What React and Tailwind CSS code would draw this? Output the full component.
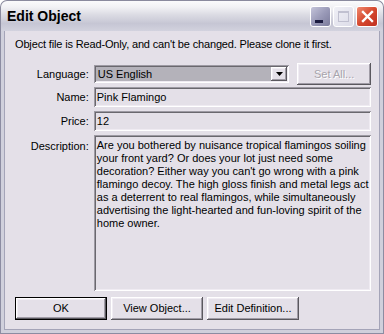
import React from "react";

const FONT = { fontFamily: '"Liberation Sans", Arial, sans-serif' };

const sunken =
  "shadow-[inset_1px_1px_0_#9d9aa3,inset_-1px_-1px_0_#ffffff,inset_2px_2px_0_#6a686e,inset_-2px_-2px_0_#efebf2]";
const raised =
  "shadow-[inset_-1px_-1px_0_#5a585e,inset_1px_1px_0_#ffffff,inset_-2px_-2px_0_#a09ca6,inset_2px_2px_0_#f1edf4]";

function Btn({ children, className = "", def = false }) {
  if (def) {
    return (
      <div className={"border border-black " + className}>
        <div className={"h-full flex items-center justify-center text-[11px] text-black bg-[#e4e0e8] " + raised}>
          {children}
        </div>
      </div>
    );
  }
  return (
    <div className={"flex items-center justify-center text-[11px] text-black bg-[#e4e0e8] " + raised + " " + className}>
      {children}
    </div>
  );
}

export default function App() {
  const lines = [
    "Are you bothered by nuisance tropical flamingos soiling",
    "your front yard? Or does your lot just need some",
    "decoration? Either way you can't go wrong with a pink",
    "flamingo decoy. The high gloss finish and metal legs act",
    "as a deterrent to real flamingos, while simultaneously",
    "advertising the light-hearted and fun-loving spirit of the",
    "home owner.",
  ];
  return (
    <div style={FONT} className="w-[384px] h-[334px] flex flex-col overflow-hidden bg-white">
      {/* Title bar */}
      <div className="h-[31px] shrink-0 flex items-center justify-between rounded-t-[7px] border border-b-0 border-[#8a8a9e] bg-[linear-gradient(to_bottom,#fbfbfc_0%,#f2f2f5_20%,#dcdce4_45%,#c6c6d4_75%,#d2d2de_100%)] pl-[6px] pr-[5px]">
        <div className="text-[14px] font-bold text-black pt-[1px]">
          Edit Object
        </div>
        <div className="flex items-center gap-[2px] pt-[1px]">
          <div className="w-[21px] h-[21px] rounded-[3px] border border-white bg-[linear-gradient(135deg,#c4c4da_0%,#9a9ab8_50%,#7c7c9c_100%)] relative">
            <div className="absolute left-[4px] top-[13px] w-[8px] h-[3px] bg-[#1c1c40]" />
          </div>
          <div className="w-[21px] h-[21px] rounded-[3px] border border-white bg-[linear-gradient(135deg,#f0f0f6_0%,#dcdce8_100%)] relative">
            <div className="absolute left-[4px] top-[4px] w-[11px] h-[11px] border border-[#c0c0d0] border-t-2" />
          </div>
          <div className="w-[22px] h-[21px] rounded-[3px] border border-white bg-[linear-gradient(135deg,#f08a70_0%,#d5482e_50%,#c03020_100%)] flex items-center justify-center">
            <svg width="13" height="13" viewBox="0 0 13 13">
              <path d="M2 2 L11 11 M11 2 L2 11" stroke="white" strokeWidth="2.4" strokeLinecap="square" />
            </svg>
          </div>
        </div>
      </div>
      {/* Body with frame */}
      <div className="flex-1 flex flex-col bg-[#e4e0e8] border-[#8c8ca2] border-l border-r border-b shadow-[inset_3px_0_0_#d0d0dc,inset_-3px_0_0_#d0d0dc,inset_0_-3px_0_#d0d0dc,inset_4px_0_0_#a4a4b8,inset_-4px_0_0_#a4a4b8,inset_0_-4px_0_#a4a4b8] px-[4px] pb-[4px]">
        <div className="flex flex-col text-[11px] text-black pl-[10px] pr-[8px]">
          <div className="h-[13px] leading-[13px] mt-[7px] tracking-[-0.15px] whitespace-nowrap">
            Object file is Read-Only, and can't be changed. Please clone it first.
          </div>
          {/* Language row */}
          <div className="flex items-center mt-[12px] h-[22px]">
            <div className="w-[74px] text-right">Language:</div>
            <div className={"ml-[5px] w-[196px] h-[18px] flex items-center bg-[#b4b2ba] pl-[4px] pr-[2px] " + sunken}>
              <div className="flex-1">US English</div>
              <div className={"w-[16px] h-[14px] bg-[#e4e0e8] flex items-center justify-center " + raised}>
                <svg width="7" height="4" viewBox="0 0 7 4"><path d="M0 0 H7 L3.5 4 Z" fill="black" /></svg>
              </div>
            </div>
            <Btn className="ml-[8px] w-[74px] h-[22px]">
              <span className="text-[#a8a4ac] [text-shadow:1px_1px_0_#ffffff]">Set All...</span>
            </Btn>
          </div>
          {/* Name */}
          <div className="flex items-center mt-[2px] h-[20px]">
            <div className="w-[74px] text-right">Name:</div>
            <div className={"ml-[5px] w-[278px] h-[20px] flex items-center pl-[3px] " + sunken}>Pink Flamingo</div>
          </div>
          {/* Price */}
          <div className="flex items-center mt-[4px] h-[20px]">
            <div className="w-[74px] text-right">Price:</div>
            <div className={"ml-[5px] w-[278px] h-[20px] flex items-center pl-[3px] " + sunken}>12</div>
          </div>
          {/* Description */}
          <div className="flex mt-[4px] h-[156px]">
            <div className="w-[74px] text-right pt-[3px]">Description:</div>
            <div className={"ml-[5px] w-[278px] h-[156px] pl-[3px] pt-[4px] leading-[13px] " + sunken}>
              {lines.map((l, i) => (
                <div key={i} className="whitespace-nowrap">{l}</div>
              ))}
            </div>
          </div>
          {/* Buttons */}
          <div className="flex mt-[6px] gap-[4px]">
            <Btn def className="w-[92px] h-[23px]">OK</Btn>
            <Btn className="w-[92px] h-[23px]">View Object...</Btn>
            <Btn className="w-[92px] h-[23px]">Edit Definition...</Btn>
          </div>
        </div>
      </div>
    </div>
  );
}
